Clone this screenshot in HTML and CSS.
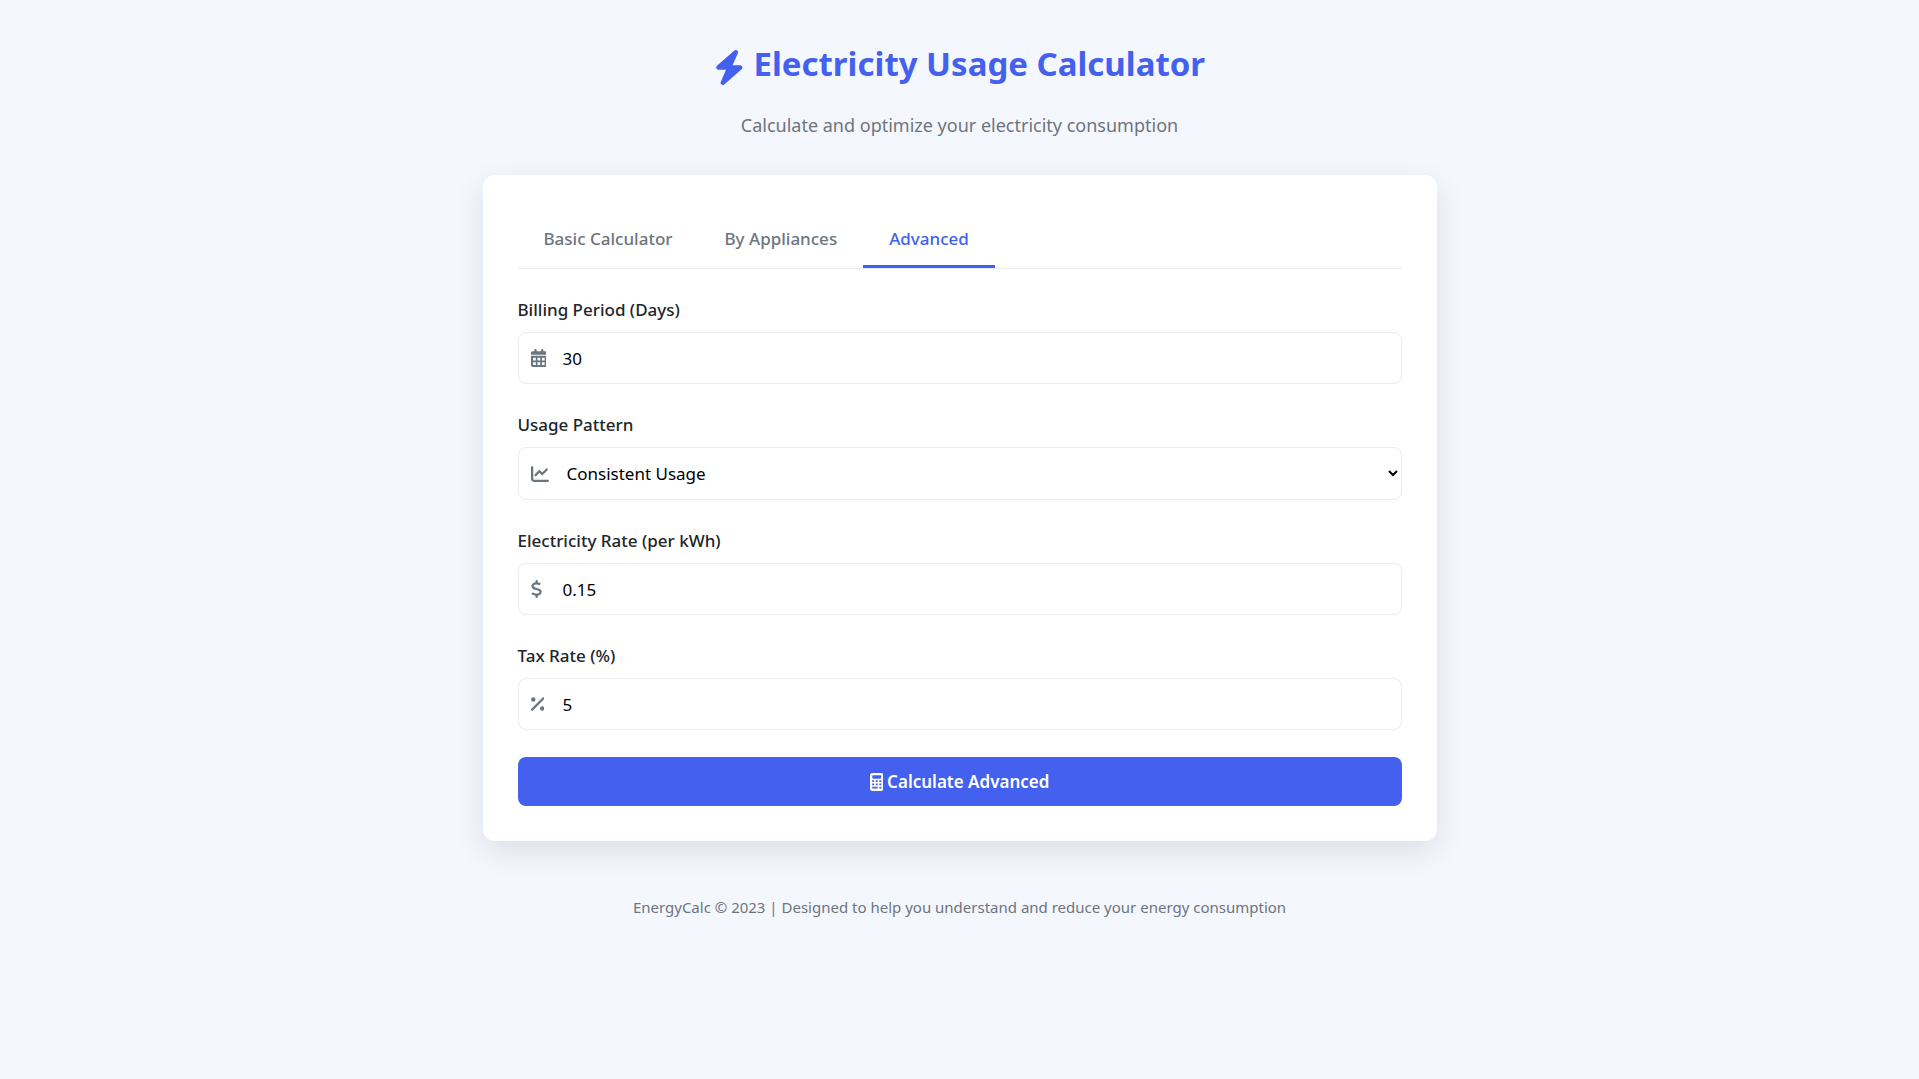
FILE: index.html
```html
<!DOCTYPE html>
<html lang="en">
<head>
    <meta charset="UTF-8">
    <meta name="viewport" content="width=device-width, initial-scale=1.0">
    <title>Electricity Usage Calculator</title>
    <link rel="stylesheet" href="styles.css">
</head>
<body>
    <div class="container">
        <header>
            <h1>
                <svg class="icon" viewBox="0 0 448 512" aria-hidden="true"><path d="M349.4 44.6c5.9-13.7 1.5-29.7-10.6-38.5s-28.6-8-39.9 1.8l-256 224c-10 8.8-13.6 22.9-8.9 35.3S50.7 288 64 288H175.5L98.6 467.4c-5.9 13.7-1.5 29.7 10.6 38.5s28.6 8 39.9-1.8l256-224c10-8.8 13.6-22.9 8.9-35.3s-16.6-20.7-30-20.7H272.5L349.4 44.6z"/></svg>
                Electricity Usage Calculator
            </h1>
            <p class="subtitle">Calculate and optimize your electricity consumption</p>
        </header>

        <main class="card">
            <div class="tabs">
                <button type="button" class="tab">Basic Calculator</button>
                <button type="button" class="tab">By Appliances</button>
                <button type="button" class="tab active">Advanced</button>
            </div>

            <form onsubmit="return false">
                <div class="form-group">
                    <label for="billing-period">Billing Period (Days)</label>
                    <div class="input-icon">
                        <svg class="icon" viewBox="0 0 448 512" aria-hidden="true"><path fill-rule="evenodd" d="M128 0c17.7 0 32 14.3 32 32V64H288V32c0-17.7 14.3-32 32-32s32 14.3 32 32V64h48c26.5 0 48 21.5 48 48v48H0V112C0 85.5 21.5 64 48 64H96V32c0-17.7 14.3-32 32-32zM0 192H448V464c0 26.5-21.5 48-48 48H48c-26.5 0-48-21.5-48-48V192zM60 250h76v76H60zM186 250h76v76h-76zM312 250h76v76h-76zM60 378h76v76H60zM186 378h76v76h-76zM312 378h76v76h-76z"/></svg>
                        <input type="number" id="billing-period" value="30" min="1">
                    </div>
                </div>

                <div class="form-group">
                    <label for="usage-pattern">Usage Pattern</label>
                    <div class="input-icon">
                        <svg class="icon" viewBox="0 0 512 512" aria-hidden="true"><path d="M64 64c0-17.7-14.3-32-32-32S0 46.3 0 64V400c0 44.2 35.8 80 80 80H480c17.7 0 32-14.3 32-32s-14.3-32-32-32H80c-8.8 0-16-7.2-16-16V64zm406.6 86.6c12.5-12.5 12.5-32.8 0-45.3s-32.8-12.5-45.3 0L320 210.7l-57.4-57.4c-12.5-12.5-32.8-12.5-45.3 0l-112 112c-12.5 12.5-12.5 32.8 0 45.3s32.8 12.5 45.3 0L240 221.3l57.4 57.4c12.5 12.5 32.8 12.5 45.3 0l128-128z"/></svg>
                        <select id="usage-pattern">
                            <option selected>Consistent Usage</option>
                        </select>
                    </div>
                </div>

                <div class="form-group">
                    <label for="electricity-rate">Electricity Rate (per kWh)</label>
                    <div class="input-icon">
                        <svg class="icon" viewBox="0 0 320 512" aria-hidden="true"><path d="M160 0c17.7 0 32 14.3 32 32V67.7c1.6 .2 3.1 .4 4.7 .7c.4 .1 .7 .1 1.1 .2l48 8.8c17.4 3.2 28.9 19.9 25.7 37.2s-19.9 28.9-37.2 25.7l-47.5-8.7c-31.3-4.6-58.9-1.5-78.3 6.2s-27.2 18.3-29 28.1c-2 10.7-.5 16.7 1.2 20.4c1.8 3.9 5.5 8.3 12.8 13.2c16.3 10.7 41.3 17.7 73.7 26.3l2.9 .8c28.6 7.6 63.6 16.8 89.6 33.8c14.2 9.3 27.6 21.9 35.9 39.5c8.5 17.9 10.3 37.9 6.4 59.2c-6.9 38-33.1 63.4-65.6 76.7c-13.7 5.6-28.6 9.2-44.4 11V480c0 17.7-14.3 32-32 32s-32-14.3-32-32V445.1c-.4-.1-.9-.1-1.3-.2l-.2 0 0 0c-24.4-3.8-64.5-14.3-91.5-26.3c-16.1-7.2-23.4-26.1-16.2-42.2s26.1-23.4 42.2-16.2c20.9 9.3 55.3 18.5 75.2 21.6c31.9 4.7 58.2 2 76-5.3c16.9-6.9 24.6-16.9 26.8-28.9c1.9-10.6 .4-16.7-1.3-20.4c-1.9-4-5.6-8.4-13-13.3c-16.4-10.7-41.5-17.7-74-26.3l-2.8-.7 0 0C119.4 279.3 84.4 270 58.4 253c-14.2-9.3-27.5-22-35.8-39.6c-8.4-17.9-10.1-37.9-6.1-59.2C23.7 116 52.3 91.2 84.8 78.3c13.3-5.3 27.9-8.9 43.2-11V32c0-17.7 14.3-32 32-32z"/></svg>
                        <input type="number" id="electricity-rate" value="0.15" min="0" step="0.01">
                    </div>
                </div>

                <div class="form-group">
                    <label for="tax-rate">Tax Rate (%)</label>
                    <div class="input-icon">
                        <svg class="icon" viewBox="0 0 384 512" aria-hidden="true"><path d="M374.6 118.6c12.5-12.5 12.5-32.8 0-45.3s-32.8-12.5-45.3 0l-320 320c-12.5 12.5-12.5 32.8 0 45.3s32.8 12.5 45.3 0l320-320zM128 128A64 64 0 1 0 0 128a64 64 0 1 0 128 0zM384 384A64 64 0 1 0 256 384a64 64 0 1 0 128 0z"/></svg>
                        <input type="number" id="tax-rate" value="5" min="0">
                    </div>
                </div>

                <button type="submit" class="btn">
                    <svg class="icon" viewBox="0 0 384 512" aria-hidden="true"><path fill-rule="evenodd" d="M64 0C28.7 0 0 28.7 0 64V448c0 35.3 28.7 64 64 64H320c35.3 0 64-28.7 64-64V64c0-35.3-28.7-64-64-64H64zM96 64H288c17.7 0 32 14.3 32 32v32c0 17.7-14.3 32-32 32H96c-17.7 0-32-14.3-32-32V96c0-17.7 14.3-32 32-32zM62 206h56v52H62zM164 206h56v52h-56zM266 206h56v52h-56zM62 298h56v52H62zM164 298h56v52h-56zM266 298h56v52h-56zM62 390h158v52H62zM266 390h56v52h-56z"/></svg>
                    Calculate Advanced
                </button>
            </form>
        </main>

        <footer>EnergyCalc © 2023 | Designed to help you understand and reduce your energy consumption</footer>
    </div>
</body>
</html>
```
FILE: styles.css
```css
:root {
    --primary: #4361ee;
    --dark: #212529;
    --gray: #6c757d;
    --border: #e9ecef;
}

* {
    margin: 0;
    padding: 0;
    box-sizing: border-box;
}

body {
    font-family: "Segoe UI", "Noto Sans", sans-serif;
    font-size: 17px;
    line-height: 28px;
    color: var(--dark);
    background: #f5f7ff;
}

.container {
    max-width: 990px;
    margin: 0 auto;
    padding: 36px 18px;
}

.icon {
    height: 18px;
    fill: currentColor;
}

header {
    text-align: center;
    margin-bottom: 34px;
}

h1 {
    display: flex;
    align-items: center;
    justify-content: center;
    gap: 9px;
    margin-bottom: 18px;
    font-size: 33px;
    line-height: 56px;
    font-weight: 700;
    color: var(--primary);
}

h1 .icon {
    height: 35px;
    margin-top: 6px;
}

.subtitle {
    font-size: 18px;
    line-height: 31px;
    color: var(--gray);
}

.card {
    padding: 35px;
    background: white;
    border-radius: 12px;
    box-shadow: 0 10px 30px rgba(0, 0, 0, 0.1);
}

/* Tabs */
.tabs {
    display: flex;
    margin-bottom: 27px;
    border-bottom: 1px solid var(--border);
}

.tab {
    padding: 15px 26px 12px;
    border: none;
    border-bottom: 3px solid transparent;
    background: none;
    font: inherit;
    font-weight: 500;
    color: var(--gray);
    cursor: pointer;
}

.tab.active {
    color: var(--primary);
    border-bottom-color: var(--primary);
}

/* Form */
.form-group {
    margin-bottom: 27px;
}

label {
    display: block;
    margin-bottom: 8px;
    font-weight: 500;
}

.input-icon {
    position: relative;
}

.input-icon .icon {
    position: absolute;
    top: 50%;
    left: 13px;
    transform: translateY(-50%);
    color: var(--gray);
}

input,
select {
    display: block;
    width: 100%;
    height: 52px;
    padding: 0 0 0 44px;
    border: 1px solid var(--border);
    border-radius: 8px;
    background: white;
    font-family: inherit;
    font-size: 17px;
    color: black;
}

select {
    height: 53px;
}

input:focus,
select:focus {
    outline: none;
    border-color: var(--primary);
}

.btn {
    display: flex;
    align-items: center;
    justify-content: center;
    gap: 4px;
    width: 100%;
    height: 49px;
    border: none;
    border-radius: 8px;
    background: var(--primary);
    font: inherit;
    font-weight: 600;
    color: white;
    cursor: pointer;
}

footer {
    margin-top: 52px;
    text-align: center;
    font-size: 15px;
    color: var(--gray);
}

@media (max-width: 768px) {
    .card {
        padding: 20px;
    }

    .tabs {
        flex-wrap: wrap;
    }
}
```
